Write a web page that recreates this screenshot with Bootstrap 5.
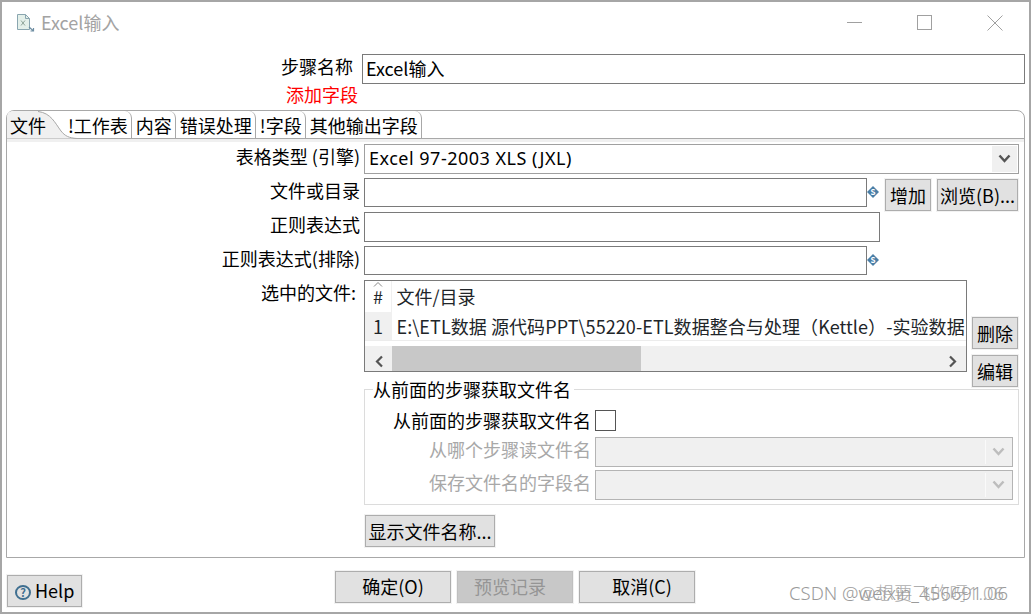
<!DOCTYPE html>
<html lang="zh">
<head>
<meta charset="utf-8">
<title>Excel输入</title>
<link rel="stylesheet" href="https://cdn.jsdelivr.net/npm/bootstrap@5.3.0/dist/css/bootstrap.min.css">
<style>
html,body{height:100%;overflow:hidden}
body{font-family:"Noto Sans CJK SC","Noto Sans",sans-serif;font-size:18px;line-height:24px;color:#000;background:#fff}
.win{width:1031px;height:614px;border:2px solid #a6a6a6;position:relative;overflow:hidden}
.titlebar{height:38px;padding:4px 0 0 13px}
.titletxt{color:#a3a3a3;margin:-2px 0 0 5px}
.winctl{margin-right:26px;gap:54px}
.namerow{height:30px;margin-top:14px;padding-right:4px}
.namelbl{width:351px;text-align:right;margin-right:9px;line-height:24px}
.addfld{height:26px;width:356px;text-align:right;color:#f00;line-height:20px}
.sw-in{height:30px;border:1px solid #7a7a7a;border-radius:0;padding:0 3px 2px;font-size:18px;line-height:26px;color:#000;box-shadow:none}
.folder{width:1019px;height:448px;margin:0 0 0 4px;border:1px solid #a8a8a8;border-radius:8px 8px 0 0}
.tabstrip{height:28px;border-bottom:1px solid #a8a8a8}
.swtab{height:27px;line-height:28px;padding:0 3px 0 4px;border-right:1px solid #a8a8a8;border-top-right-radius:7px;white-space:nowrap}
.swtab1{width:61px;padding:0 0 0 3px;position:relative;border:0;z-index:1}
.swtab1 svg{position:absolute;left:0;top:0;z-index:-1}
.swtab2{padding-left:0}
.panel{height:418px;border-top:3px solid #f0f0f0}
.frow{height:34px;padding-top:2px}
.lbl{width:353px;text-align:right;margin-right:4px;line-height:24px;white-space:nowrap}
.fld{width:503px;height:29px}
.fldwide{width:516px;height:30px}
.swbtn{background:#e1e1e1;border:1px solid #adadad;outline:1px solid #f2f2f2;border-radius:0;padding:0;font-size:18px;line-height:24px;color:#000;white-space:nowrap}
.sq{width:46px;height:32px}
.combo{width:655px;height:30px;border:1px solid #a0a0a0;padding:2px 1px 2px 4px;line-height:24px}
.combotxt{margin-top:-3px;font-family:"Noto Sans",sans-serif;letter-spacing:.5px}
.comboarrow{width:25px;height:26px;background:#f0f0f0}
.varicon{width:12px;margin:8px 6px 0 0}
.browse{width:81px;margin-left:6px}
.addb{margin-top:1px}
.frow5{height:111px;padding-top:2px}
.grid{width:603px;height:92px;border:1px solid #7a7a7a;overflow:hidden}
.gridbody{height:65px}
.gridtable{table-layout:fixed;width:601px;--bs-table-bg:transparent}
.gridtable td{padding:0 0 0 5px;border:0;white-space:nowrap;overflow:hidden;vertical-align:middle;line-height:24px}
.gridtable tr:first-child td{height:31px;padding-bottom:2px}
.gridtable tr:nth-child(2) td{height:28px;border-bottom:1px solid #ececec;letter-spacing:.07px}
.gridtable .nr{width:26px;border-right:1px solid #f0f0f0;padding-left:8px;position:relative}
.gridtable tr:nth-child(2) .nr{background:#f0f0f0}
.sortup{position:absolute;left:8px;top:1px}
.hscroll{height:25px;background:#f0f0f0}
.sbarrow{width:27px}
.thumb{width:249px;height:100%;background:#c8c8c8}
.sidebtns{margin-left:5px;padding-top:37px;gap:6px}
.grp{width:655px;height:116px;margin-left:357px;border:1px solid #dcdcdc;position:relative;padding-top:19px}
.grplegend{position:absolute;left:8px;top:-13px;background:#fff;padding-right:3px;line-height:24px}
.glbl{width:226px;text-align:right;margin-right:4px;line-height:22px}
.swcheck{width:21px;height:21px;border:1px solid #555;background:#fff}
.gr2{margin-top:6px;height:29px}
.gr3{margin-top:4px;height:29px}
.dim{color:#a8a8a8;margin-bottom:6px}
.disco{width:418px;height:30px;border:1px solid #b4b4b4;background:#f0f0f0;padding:2px;justify-content:flex-end}
.discoarr{width:25px;border-left:1px solid #fafafa}
.showbtn{width:130px;height:32px;margin:10px 0 0 358px}
.foot{height:51px;position:relative}
.helpb{width:75px;height:32px;margin:17px 0 0 5px;text-align:left;padding:0 0 2px 7px}
.qm{display:inline-flex;width:16px;height:15px;border:2px solid #3f6f90;border-radius:50%;font-size:11px;line-height:10px;color:#3f6f90;align-items:center;justify-content:center;margin-right:4px;vertical-align:1px;font-weight:700}
.act{width:116px;height:32px;margin:13px 6px 0 0;padding-bottom:2px}
.acts{margin-left:253px}
.swbtn.swoff:disabled{background:#c8c8c8;color:#959595;border-color:#bfbfbf;opacity:1;padding-right:10px}
.actlast{padding-left:10px}
.wm1,.wm2{position:absolute;top:23px;color:#9a9a9a;font-size:18.5px;white-space:nowrap;font-family:"Noto Sans","Noto Sans CJK SC",sans-serif;font-weight:300}
.wm1{left:787px}
.wm2{left:857px;opacity:.8}
</style>
</head>
<body>
<div class="win">
  <div class="titlebar d-flex align-items-center">
    <svg width="21" height="20" viewBox="0 0 21 20"><path d="M2.500 1.500h8l4 4v11h-12z" fill="#e4f0ea" stroke="#8aa6b0"/><path d="M10.500 1.500v4h4" fill="none" stroke="#8aa6b0"/><path d="M6 7.500l4 5m0-5l-4 5" stroke="#8fa59a" fill="none"/><path d="M14 14l4.500 4m0-3v3h-3" stroke="#6f8ea3" fill="none" stroke-width="1.200"/></svg>
    <span class="titletxt">Excel输入</span>
    <div class="winctl d-flex align-items-center ms-auto">
      <svg width="16" height="16" viewBox="0 0 16 16"><path d="M0 7.500h15" stroke="#a0a0a0"/></svg>
      <svg width="16" height="16" viewBox="0 0 16 16"><rect x=".5" y=".5" width="14" height="14" fill="none" stroke="#a0a0a0"/></svg>
      <svg width="16" height="16" viewBox="0 0 16 16"><path d="M.5.500l15 15m0-15l-15 15" stroke="#a0a0a0"/></svg>
    </div>
  </div>
  <div class="namerow d-flex">
    <div class="namelbl">步骤名称</div>
    <input class="form-control sw-in flex-grow-1 w-auto" value="Excel输入">
  </div>
  <div class="addfld">添加字段</div>
  <div class="folder">
    <div class="tabstrip d-flex">
      <div class="swtab swtab1">文件
        <svg width="72" height="28" viewBox="0 0 72 28"><path d="M0 28V6Q0 0 6 0H31C44 2 48 12 54 20C58 25 62 27 70 27.500H0Z" fill="#f0f0f0"/><path d="M31 .5C44 2 48 12 54 20C58 25 62 27 70 27.500" fill="none" stroke="#a8a8a8"/></svg>
      </div>
      <div class="swtab swtab2">&#33;工作表</div>
      <div class="swtab">内容</div>
      <div class="swtab">错误处理</div>
      <div class="swtab">&#33;字段</div>
      <div class="swtab">其他输出字段</div>
    </div>
    <div class="panel">
      <div class="frow d-flex">
        <div class="lbl">表格类型 (引擎)</div>
        <div class="combo d-flex justify-content-between align-items-center">
          <span class="combotxt">Excel 97-2003 XLS (JXL)</span>
          <span class="comboarrow d-flex align-items-center justify-content-center"><svg width="13" height="10" viewBox="0 0 13 10"><path d="M1.500 1.500L6.500 7l5-5.500" fill="none" stroke="#555" stroke-width="2.500"/></svg></span>
        </div>
      </div>
      <div class="frow d-flex">
        <div class="lbl">文件或目录</div>
        <input class="form-control sw-in fld">
        <svg class="varicon align-self-start" width="12" height="12" viewBox="0 0 12 12"><path d="M6 0l6 6-6 6-6-6z" fill="#4a7ea6"/><text x="6" y="9" font-size="8" font-weight="700" text-anchor="middle" fill="#fff">S</text></svg>
        <button class="btn swbtn sq addb">增加</button>
        <button class="btn swbtn sq browse addb">浏览(B)...</button>
      </div>
      <div class="frow d-flex">
        <div class="lbl">正则表达式</div>
        <input class="form-control sw-in fld fldwide">
      </div>
      <div class="frow d-flex">
        <div class="lbl">正则表达式(排除)</div>
        <input class="form-control sw-in fld">
        <svg class="varicon align-self-start" width="12" height="12" viewBox="0 0 12 12"><path d="M6 0l6 6-6 6-6-6z" fill="#4a7ea6"/><text x="6" y="9" font-size="8" font-weight="700" text-anchor="middle" fill="#fff">S</text></svg>
      </div>
      <div class="frow frow5 d-flex">
        <div class="lbl">选中的文件:&nbsp;</div>
        <div class="grid">
          <div class="gridbody">
            <table class="table gridtable m-0">
              <tr><td class="nr"><svg class="sortup" width="10" height="5" viewBox="0 0 10 5"><path d="M1 4.500l4-4 4 4" fill="none" stroke="#888"/></svg>#</td><td>文件/目录</td></tr>
              <tr><td class="nr">1</td><td>E:\ETL数据 源代码PPT\55220-ETL数据整合与处理（Kettle）-实验数据</td></tr>
            </table>
          </div>
          <div class="hscroll d-flex align-items-center">
            <span class="sbarrow text-center"><svg width="10" height="13" viewBox="0 0 10 13"><path d="M8 1.500L3 6.500l5 5" fill="none" stroke="#555" stroke-width="2.200"/></svg></span>
            <span class="thumb"></span>
            <span class="sbarrow text-center ms-auto"><svg width="10" height="13" viewBox="0 0 10 13"><path d="M2 1.500l5 5-5 5" fill="none" stroke="#555" stroke-width="2.200"/></svg></span>
          </div>
        </div>
        <div class="sidebtns d-flex flex-column">
          <button class="btn swbtn sq">删除</button>
          <button class="btn swbtn sq">编辑</button>
        </div>
      </div>
      <div class="grp">
        <div class="grplegend">从前面的步骤获取文件名</div>
        <div class="d-flex align-items-center">
          <div class="glbl">从前面的步骤获取文件名</div>
          <span class="swcheck"></span>
        </div>
        <div class="d-flex align-items-center gr2">
          <div class="glbl dim">从哪个步骤读文件名</div>
          <div class="disco d-flex"><span class="discoarr d-flex align-items-center justify-content-center"><svg width="13" height="10" viewBox="0 0 13 10"><path d="M1.500 1.500L6.500 7l5-5.500" fill="none" stroke="#bdbdbd" stroke-width="2.500"/></svg></span></div>
        </div>
        <div class="d-flex align-items-center gr3">
          <div class="glbl dim">保存文件名的字段名</div>
          <div class="disco d-flex"><span class="discoarr d-flex align-items-center justify-content-center"><svg width="13" height="10" viewBox="0 0 13 10"><path d="M1.500 1.500L6.500 7l5-5.500" fill="none" stroke="#bdbdbd" stroke-width="2.500"/></svg></span></div>
        </div>
      </div>
      <button class="btn swbtn showbtn d-block">显示文件名称...</button>
    </div>
  </div>
  <div class="foot d-flex align-items-start">
    <button class="btn swbtn helpb"><span class="qm">?</span>Help</button>
    <div class="acts d-flex">
      <button class="btn swbtn act">确定(O)</button>
      <button class="btn swbtn act swoff" disabled>预览记录</button>
      <button class="btn swbtn act actlast">取消(C)</button>
    </div>
    <span class="wm1">CSDN @weixin_456691.06</span>
    <span class="wm2">@想要飞的呀1.06</span>
  </div>
</div>
<script src="https://cdn.jsdelivr.net/npm/bootstrap@5.3.0/dist/js/bootstrap.bundle.min.js"></script>
</body>
</html>
